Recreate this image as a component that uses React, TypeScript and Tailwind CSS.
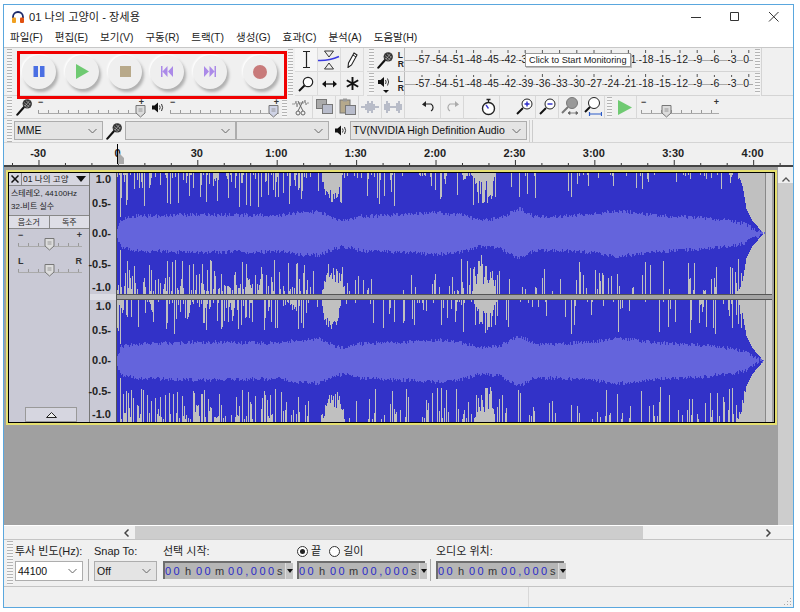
import type { ReactNode } from "react"

const menus = ["파일(F)", "편집(E)", "보기(V)", "구동(R)", "트랙(T)", "생성(G)", "효과(C)", "분석(A)", "도움말(H)"]
const meterLabels = ["-57", "-54", "-51", "-48", "-45", "-42", "-39", "-36", "-33", "-30", "-27", "-24", "-21", "-18", "-15", "-12", "-9", "-6", "-3", "0"]
const coveredLabels = ["-36", "-33", "-30", "-27", "-24"]
const rulerLabels = ["-30", "0", "30", "1:00", "1:30", "2:00", "2:30", "3:00", "3:30", "4:00"]

// rms half height of the track at a given x, read off the picture
const rmsPoints = [[118, 6], [122, 14], [135, 17], [200, 19], [280, 18], [300, 21], [320, 22], [335, 15], [345, 13], [360, 17], [400, 19], [440, 21], [465, 18], [480, 13], [500, 15], [520, 25], [535, 17], [560, 17], [600, 20], [617, 23], [660, 18], [700, 16], [730, 13], [745, 10], [755, 4], [764, 0]]
const fadePoints = [[118, 61], [738, 61], [743, 48], [747, 25], [753, 13], [764, 0]]

function lerp(points: number[][], x: number) {
  for (let i = 1; i < points.length; i++) {
    if (x <= points[i][0]) {
      const [x0, y0] = points[i - 1]
      const [x1, y1] = points[i]
      return y0 + ((y1 - y0) * (x - x0)) / (x1 - x0)
    }
  }
  return 0
}

function makeRandom(seed: number) {
  let s = seed
  return () => {
    s = (s * 1664525 + 1013904223) % 4294967296
    return s / 4294967296
  }
}

function spikeChance(x: number, bottom: boolean) {
  if (x < 310) return bottom ? 0.55 : 0.5
  if (x < 322) return 0.12
  if (x < 470) return bottom ? 0.3 : 0.28
  if (x < 500) return 0.4
  if (x < 560) return bottom ? 0.18 : 0.14
  if (x < 620) return 0.22
  if (x < 700) return bottom ? 0.18 : 0.14
  return 0.32
}

function mound(x: number, from: number, to: number, depth: number) {
  if (x < from || x > to) return 0
  const mid = (from + to) / 2
  return depth * Math.min(1, 2.5 * (1 - Math.abs(x - mid) / ((to - from) / 2)))
}

function buildWave(seed: number, h: number) {
  const rand = makeRandom(seed)
  const c = h / 2
  let peak = ""
  let rms = ""
  for (let i = 0; i < 648; i++) {
    const x = 118 + i
    const px = i + 0.5
    const fade = c - lerp(fadePoints, x)
    let top = 0
    let bot = 0
    if (rand() < spikeChance(x, false)) top = 2 + Math.pow(rand(), 2.2) * 32
    if (rand() < spikeChance(x, true)) bot = 3 + Math.pow(rand(), 1.6) * 32
    if (x === 121) { top = 44; bot = 44 }
    top = Math.max(top, mound(x, 322, 342, 24) * (0.7 + rand() * 0.5), mound(x, 474, 496, 26) * (0.3 + rand() * 1))
    bot = Math.max(bot, mound(x, 323, 346, 30) * (0.35 + rand() * 0.7), mound(x, 474, 496, 30) * (0.3 + rand() * 1))
    top = Math.max(Math.round(top), Math.round(fade))
    bot = Math.max(Math.round(bot), Math.round(fade))
    if (top + bot < h) peak += `M${px} ${top}V${h - bot}`
    const r = lerp(rmsPoints, x)
    const rt = Math.max(0, r + (rand() - 0.5) * 4)
    const rb = Math.max(0, r + (rand() - 0.5) * 4)
    if (rt + rb > 0.5) rms += `M${px} ${Math.round(c - rt)}V${Math.round(c + rb)}`
  }
  return { peak, rms }
}

function Wave({ seed, h }: { seed: number; h: number }) {
  const { peak, rms } = buildWave(seed, h)
  return (
    <svg width={648} height={h} shapeRendering="crispEdges" className="block shrink-0">
      <rect width={648} height={h} fill="#c0c0c0" />
      <path d={peak} stroke="#3232c8" strokeWidth={1} fill="none" />
      <path d={rms} stroke="#6464dc" strokeWidth={1} fill="none" />
    </svg>
  )
}

function Grip({ className = "" }: { className?: string }) {
  return <div className={`w-[5px] shrink-0 bg-[repeating-linear-gradient(to_bottom,#b4b4b4_0,#b4b4b4_1px,#f6f6f6_1px,#f6f6f6_3px)] ${className}`} />
}

function Mic({ small = false }: { small?: boolean }) {
  const size = small ? 18 : 20
  return (
    <svg width={size} height={size} viewBox="0 0 20 20" className="shrink-0">
      <path d="M9 10 L1.5 18.5" stroke="#111" strokeWidth={2.4} strokeLinecap="round" />
      <circle cx={12.5} cy={6.5} r={5.2} fill="#333" />
      <path d="M9 5l6 5M11 3l5 4M8.5 7.5l5 4M10 9l5-6M13 10l3-4" stroke="#bbb" strokeWidth={0.7} />
    </svg>
  )
}

function Speaker() {
  return (
    <svg width={13} height={13} viewBox="0 0 13 13" className="shrink-0">
      <path d="M1 4.5h2.5L7 1.5v10L3.5 8.5H1z" fill="#111" />
      <path d="M8.5 4.5q1.3 2 0 4M10.5 3q2.2 3.5 0 7" stroke="#333" strokeWidth={1} fill="none" />
    </svg>
  )
}

function Chevron() {
  return (
    <svg width={9} height={6} viewBox="0 0 9 6" className="shrink-0">
      <path d="M0.5 1l4 4 4-4" stroke="#666" strokeWidth={1} fill="none" />
    </svg>
  )
}

function Thumb({ color = "#dcdcdc" }: { color?: string }) {
  return (
    <svg width={11} height={14} viewBox="0 0 11 14">
      <path d="M1 1.5h9v7.5l-4.5 4-4.5-4z" fill={color} stroke="#777" strokeWidth={1} />
      <path d="M3.5 5h4M3.5 7h4" stroke="#888" strokeWidth={0.8} />
    </svg>
  )
}

// tick line shared by all the little gain and pan sliders
function Slider({ width, thumbClass, left = "−", right = "+", color }: { width: string; thumbClass: string; left?: string; right?: string; color?: string }) {
  return (
    <div className={`relative h-[20px] shrink-0 ${width}`}>
      <div className="flex justify-between text-[9px] leading-[10px] text-[#333] font-bold">
        <span>{left}</span>
        <span>{right}</span>
      </div>
      <div className="mt-[2px] h-[5px] border-b border-[#aaa] bg-[repeating-linear-gradient(to_right,#999_0,#999_1px,transparent_1px,transparent_10px)] bg-[length:100%_3px] bg-bottom bg-no-repeat" />
      <div className={`absolute top-[7px] ${thumbClass}`}>
        <Thumb color={color} />
      </div>
    </div>
  )
}

function Select({ width, label = "", bg = "bg-[#e4e4e4]" }: { width: string; label?: string; bg?: string }) {
  return (
    <div className={`flex h-[19px] shrink-0 items-center justify-between border border-[#adadad] pl-[2px] pr-[5px] text-[10.5px] text-[#111] ${bg} ${width}`}>
      <span className="whitespace-nowrap">{label}</span>
      <Chevron />
    </div>
  )
}

function TimeField() {
  return (
    <div className="flex h-[18px] w-[128px] shrink-0 items-stretch border-t-2 border-l-2 border-[#6e6e6e] bg-[#b6b6b6]">
      <div className="flex flex-1 whitespace-nowrap text-[11px] leading-[16px] tracking-[2.5px] text-[#333]">
        <span className="w-[20px] text-[#2a2ac8]">00</span>
        <span className="w-[11px]">h</span>
        <span className="w-[19px] text-[#2a2ac8]">00</span>
        <span className="w-[13px]">m</span>
        <span className="w-[49px] text-[#2a2ac8]">00,000</span>
        <span>s</span>
      </div>
      <div className="flex w-[8px] shrink-0 items-center justify-center border-l border-[#ddd] bg-[#c4c4c4]">
        <svg width={6} height={4} viewBox="0 0 6 4"><path d="M0 0h6L3 4z" fill="#111" /></svg>
      </div>
    </div>
  )
}

function RoundButton({ className = "", children }: { className?: string; children: ReactNode }) {
  return (
    <div className={`flex h-[34px] w-[34px] shrink-0 items-center justify-center rounded-full bg-[#efefef] shadow-[2px_3px_3px_#b0b0b0,-1px_-1px_2px_#ffffff] ${className}`}>
      {children}
    </div>
  )
}

function ToolCell({ children, className = "" }: { children: ReactNode; className?: string }) {
  return <div className={`flex h-[24px] w-[23px] items-center justify-center border-r border-b border-[#dcdcdc] ${className}`}>{children}</div>
}

function EditButton({ children, className = "" }: { children: ReactNode; className?: string }) {
  return <div className={`flex h-[23px] w-[23px] shrink-0 items-center justify-center border-r border-b border-[#d8d8d8] ${className}`}>{children}</div>
}

function MeterRow({ first, icon }: { first?: boolean; icon: ReactNode }) {
  return (
    <div className="flex h-[24px] items-stretch border-b border-[#d4d4d4]">
      <Grip className="ml-[2px] my-[1px]" />
      <div className="flex w-[30px] items-center pl-[3px]">
        {icon}
        <div className="ml-auto text-[8.5px] leading-[9px] font-bold text-[#222]">L<br />R</div>
      </div>
      <div className="relative w-[349px] border-l border-[#bbb] bg-[linear-gradient(#aaa,#aaa)] bg-[length:100%_1px] bg-[position:0_12px] bg-no-repeat">
        <svg width={349} height={5} className="block">
          <path d={Array.from({ length: 20 }, (_, i) => `M${17 + i * 17.2} ${i % 3 === 1 || first ? 2 : 3}V5`).join("")} stroke="#555" fill="none" />
        </svg>
        <div className="flex pl-[9px] text-[10.5px] leading-[13px] text-[#222]">
          {meterLabels.map((m) => (
            <div key={m} className={`flex w-[17.2px] shrink-0 justify-center ${m === "0" ? "ml-[-3px]" : ""} ${first && coveredLabels.includes(m) ? "invisible" : ""}`}>
              <span className="bg-[#f0f0f0]">{m}</span>
            </div>
          ))}
        </div>
        {first && (
          <div className="absolute left-[120px] top-[5px] whitespace-nowrap border border-[#999] bg-white px-[3px] text-[9.2px] leading-[12px] text-[#222] shadow-[1px_1px_0_#bbb]">
            Click to Start Monitoring
          </div>
        )}
      </div>
      <Grip className="ml-[2px] my-[1px]" />
    </div>
  )
}

function Ruler({ first }: { first?: boolean }) {
  return (
    <div className={`flex w-[26px] shrink-0 flex-col items-end bg-[#c9c9d5] pr-[5px] text-[11px] font-bold leading-[14px] text-[#222] ${first ? "h-[121px]" : "h-[122px]"}`}>
      <span className="mt-[-1px]">1.0</span>
      <span className="mt-[10px]">0.5-</span>
      <span className="mt-[16px]">0.0-</span>
      <span className="mt-[17px]">-0.5-</span>
      <span className="mt-[9px]">-1.0</span>
    </div>
  )
}

export default function App() {
  return (
    <div className="h-[612px] w-[800px] overflow-hidden bg-white pl-[3px] pt-[4px] font-['Liberation_Sans','Noto_Sans_CJK_KR',sans-serif] text-[#111]">
      <div className="flex h-[604px] w-[791px] flex-col border border-[#5aa7de] bg-[#f0f0f0]">
        {/* Title bar */}
        <div className="flex h-[24px] shrink-0 items-center bg-white pl-[7px] text-[11.2px] text-[#222]">
          <svg width={14} height={14} viewBox="0 0 14 14" className="shrink-0">
            <path d="M2 8V7a5 5 0 0 1 10 0v1" stroke="#1c2a6a" strokeWidth={1.8} fill="none" />
            <rect x={1} y={7.5} width={4} height={5.5} rx={1} fill="#f0a020" />
            <rect x={9} y={7.5} width={4} height={5.5} rx={1} fill="#e05010" />
          </svg>
          <span className="ml-[4px]">01 나의 고양이 - 장세용</span>
          <svg width={89} height={12} viewBox="0 0 89 12" className="ml-auto mr-[13px]">
            <path d="M0 6.5h10M39.5 1.5h8v8h-8zM78 1l9.5 9.5M87.5 1L78 10.5" stroke="#333" strokeWidth={1} fill="none" />
          </svg>
        </div>

        {/* Menu */}
        <div className="flex h-[18px] shrink-0 items-center gap-[12px] bg-white pl-[6px] text-[10.5px] text-[#222]">
          {menus.map((m) => (
            <span key={m}>{m}</span>
          ))}
        </div>

        {/* Toolbars, first row */}
        <div className="relative flex h-[49px] shrink-0 border-t border-[#c8c8c8]">
          <div className="flex w-[282px] shrink-0 items-center border-b border-[#d4d4d4]">
            <Grip className="ml-[3px] h-[45px]" />
            <RoundButton className="ml-[10px]">
              <svg width={12} height={11} viewBox="0 0 12 11"><path d="M0.5 0h4.5v11H0.5zM7 0h4.5v11H7z" fill="#4a6fe3" /></svg>
            </RoundButton>
            <RoundButton className="ml-[9px]">
              <svg width={14} height={15} viewBox="0 0 14 15"><path d="M1 0l13 7.5L1 15z" fill="#6fca72" /></svg>
            </RoundButton>
            <RoundButton className="ml-[9px]">
              <div className="h-[11px] w-[11px] bg-[#b8a98a]" />
            </RoundButton>
            <RoundButton className="ml-[8px]">
              <svg width={12} height={11} viewBox="0 0 12 11"><path d="M0 0h1.5v11H0zM6.5 0v11L1.5 5.5zM12 0v11L7 5.5z" fill="#ab8ae8" /></svg>
            </RoundButton>
            <RoundButton className="ml-[9px]">
              <svg width={12} height={11} viewBox="0 0 12 11"><path d="M12 0h-1.5v11H12zM5.500 0v11l5-5.500zM0 0v11l5-5.500z" fill="#ab8ae8" /></svg>
            </RoundButton>
            <RoundButton className="ml-[16px]">
              <div className="h-[14px] w-[14px] rounded-full bg-[#c87a7a]" />
            </RoundButton>
          </div>
          <Grip className="ml-[2px] my-[1px]" />
          <div className="ml-[2px] grid h-[48px] shrink-0 grid-cols-3">
            <ToolCell className="bg-[#f6f6f6]">
              <svg width={9} height={17} viewBox="0 0 9 17"><path d="M1 .5h7M4.5 .5v16M1 16.5h7" stroke="#222" strokeWidth={1.2} fill="none" /></svg>
            </ToolCell>
            <ToolCell>
              <svg width={22} height={20} viewBox="0 0 22 20">
                <path d="M6.5 1h9L11 7zM6.5 19h9L11 13z" fill="#eee" stroke="#222" strokeWidth={0.9} />
                <path d="M0 10.5q11 .5 21-4" stroke="#3a3ae0" strokeWidth={1.6} fill="none" />
              </svg>
            </ToolCell>
            <ToolCell>
              <svg width={12} height={16} viewBox="0 0 12 16"><path d="M8 1l3 2-5.500 10L2 15.500 2.500 11z" fill="#fff" stroke="#222" strokeWidth={1.1} /><path d="M7 3l3 2" stroke="#222" /></svg>
            </ToolCell>
            <ToolCell>
              <svg width={16} height={16} viewBox="0 0 16 16"><circle cx={10} cy={6} r={4.7} fill="#fff" stroke="#222" strokeWidth={1.2} /><path d="M6.500 9.500L1 15" stroke="#111" strokeWidth={2} /></svg>
            </ToolCell>
            <ToolCell>
              <svg width={15} height={8} viewBox="0 0 15 8"><path d="M2 4h11" stroke="#111" strokeWidth={1.3} /><path d="M0 4l4-3.500v7zM15 4l-4-3.500v7z" fill="#111" /></svg>
            </ToolCell>
            <ToolCell>
              <svg width={13} height={13} viewBox="0 0 13 13"><path d="M6.500 0v13M.8 3.200l11.400 6.600M.8 9.800l11.400-6.600" stroke="#111" strokeWidth={1.9} /></svg>
            </ToolCell>
          </div>
          <div className="ml-[3px] flex flex-col">
            <MeterRow first icon={<Mic small />} />
            <MeterRow
              icon={
                <svg width={16} height={18} viewBox="0 0 16 18" className="shrink-0">
                  <path d="M1 5h2.500L7 2v10L3.500 9H1z" fill="#111" />
                  <path d="M8.500 5q1.300 2 0 4M10.500 3.500q2.200 3.500 0 7" stroke="#222" strokeWidth={0.9} fill="none" />
                  <path d="M6 15h6l-3 3z" fill="#111" />
                </svg>
              }
            />
          </div>
          <div className="ml-[1px] flex-1 border-l border-b border-[#d4d4d4]" />
          {/* red annotation */}
          <div className="absolute left-[13px] top-[3px] h-[48px] w-[270px] border-[3px] border-[#f00000]" />
        </div>

        {/* Second row */}
        <div className="flex h-[23px] shrink-0 items-center border-b border-[#d4d4d4]">
          <Grip className="ml-[3px] h-[21px]" />
          <div className="ml-[4px]"><Mic small /></div>
          <Slider width="ml-[4px] w-[106px]" thumbClass="left-[97px]" />
          <div className="ml-[7px]"><Speaker /></div>
          <Slider width="ml-[6px] w-[109px]" thumbClass="left-[98px]" color="#cfd3e6" />
          <Grip className="ml-[3px] h-[21px]" />
          <div className="ml-[3px] flex">
            <EditButton>
              <svg width={18} height={18} viewBox="0 0 18 18"><path d="M0 6h3l1-3 1 6 1-4h6l1-3 1 5 1-2h2" stroke="#999" fill="none" /><circle cx={6} cy={15} r={2} fill="none" stroke="#666" /><circle cx={11} cy={15} r={2} fill="none" stroke="#666" /><path d="M6 13l5-10M11 13L6 3" stroke="#666" /></svg>
            </EditButton>
            <EditButton>
              <svg width={17} height={15} viewBox="0 0 17 15"><rect x={.5} y={.5} width={10} height={9} fill="#aaa" stroke="#777" /><rect x={6.5} y={5.5} width={10} height={9} fill="#b8bccb" stroke="#777" /></svg>
            </EditButton>
            <EditButton>
              <svg width={17} height={17} viewBox="0 0 17 17"><rect x={1} y={2} width={10} height={13} fill="#b5a98c" stroke="#777" /><rect x={4} y={0.5} width={4} height={3} fill="#999" /><rect x={6.5} y={7.5} width={10} height={9} fill="#b8bccb" stroke="#777" /></svg>
            </EditButton>
            <EditButton>
              <svg width={18} height={14} viewBox="0 0 18 14"><path d="M0 7h4M14 7h4M5 4v6M7 1v12M9 3v8M11 1v12M13 4v6" stroke="#8088a0" fill="none" /></svg>
            </EditButton>
            <EditButton>
              <svg width={18} height={14} viewBox="0 0 18 14"><path d="M1 4v6M3 1v12M5 3v8M6 7h6M13 3v8M15 1v12M17 4v6" stroke="#8088a0" fill="none" /></svg>
            </EditButton>
          </div>
          <div className="ml-[13px] flex">
            <EditButton>
              <svg width={14} height={11} viewBox="0 0 14 11"><path d="M3 3h6a4 4 0 0 1 0 7" stroke="#222" strokeWidth={1.2} fill="none" /><path d="M0 3.5L4 0v6z" fill="#222" /></svg>
            </EditButton>
            <EditButton>
              <svg width={14} height={11} viewBox="0 0 14 11"><path d="M11 3H5a4 4 0 0 0 0 7" stroke="#aaa" strokeWidth={1.2} fill="none" /><path d="M14 3.5L10 0v6z" fill="#aaa" /></svg>
            </EditButton>
          </div>
          <div className="ml-[13px] flex">
            <EditButton>
              <svg width={15} height={18} viewBox="0 0 15 18"><circle cx={7.5} cy={10.5} r={6} fill="#fff" stroke="#222" strokeWidth={1.4} /><path d="M5.5 1.5h4M7.5 1.5v3" stroke="#222" strokeWidth={1.3} /><path d="M7.5 10.5L5 7" stroke="#3a3ad0" strokeWidth={1.3} /></svg>
            </EditButton>
          </div>
          <div className="ml-[13px] flex">
            <EditButton>
              <svg width={17} height={17} viewBox="0 0 17 17"><circle cx={11} cy={6} r={5} fill="#fff" stroke="#222" /><path d="M7 10l-6 6" stroke="#111" strokeWidth={2} /><path d="M8.5 6h5M11 3.5v5" stroke="#2a2ac8" strokeWidth={1.4} /></svg>
            </EditButton>
            <EditButton>
              <svg width={17} height={17} viewBox="0 0 17 17"><circle cx={11} cy={6} r={5} fill="#fff" stroke="#222" /><path d="M7 10l-6 6" stroke="#111" strokeWidth={2} /><path d="M8.5 6h5" stroke="#2a2ac8" strokeWidth={1.4} /></svg>
            </EditButton>
            <EditButton>
              <svg width={18} height={19} viewBox="0 0 18 19"><circle cx={11} cy={6} r={5.5} fill="#999" stroke="#777" /><path d="M7 10l-6 6" stroke="#777" strokeWidth={2} /><path d="M7 16h10M7 16l2-1.5v3zM17 16l-2-1.5v3z" stroke="#666" strokeWidth={.8} fill="#666" /></svg>
            </EditButton>
            <EditButton>
              <svg width={18} height={19} viewBox="0 0 18 19"><circle cx={10} cy={6} r={5.5} fill="#fff" stroke="#222" /><path d="M6 10l-5 5" stroke="#111" strokeWidth={2} /><path d="M5.5 17h12M5.5 15v4M17.5 15v4" stroke="#2a5ac8" strokeWidth={1.2} fill="none" /></svg>
            </EditButton>
          </div>
          <Grip className="ml-[2px] h-[21px]" />
          <div className="ml-[2px] flex h-[23px] w-[23px] items-center justify-center border-r border-[#d8d8d8]">
            <svg width={14} height={15} viewBox="0 0 14 15"><path d="M0 0l14 7.5L0 15z" fill="#6fca72" /></svg>
          </div>
          <Slider width="ml-[4px] w-[78px]" thumbClass="left-[20px]" />
        </div>

        {/* Third row */}
        <div className="flex h-[24px] shrink-0 items-center border-b border-[#d4d4d4]">
          <Grip className="ml-[3px] h-[22px]" />
          <Select width="ml-[2px] w-[89px]" label="MME" />
          <div className="ml-[3px]"><Mic small /></div>
          <Select width="ml-[1px] w-[111px]" />
          <Select width="w-[93px]" />
          <div className="ml-[5px]"><Speaker /></div>
          <Select width="ml-[3px] w-[177px]" label="TV(NVIDIA High Definition Audio" />
          <div className="ml-[2px] h-[22px] w-[4px] border-x border-[#ccc]" />
        </div>

        {/* Timeline */}
        <div className="relative flex h-[24px] shrink-0 flex-col overflow-hidden border-b-2 border-[#444]">
          <div className="ml-[-5.6px] flex pt-[4px] text-[11px] font-bold leading-[13px] text-[#222]">
            {rulerLabels.map((r) => (
              <div key={r} className="w-[79.4px] shrink-0 text-center">{r}</div>
            ))}
          </div>
          <svg width={789} height={5} className="mt-auto block">
            <path d={Array.from({ length: 30 }, (_, i) => `M${8.5 + i * 26.47} ${(i + 2) % 3 === 0 ? 0 : 3}V5`).join("")} stroke="#333" fill="none" />
          </svg>
          <div className="absolute left-[113px] top-[1px] h-[20px] w-[1px] bg-black" />
          <svg width={6} height={12} viewBox="0 0 6 12" className="absolute left-[114px] top-[9px]">
            <path d="M0 0l6 6v6H0z" fill="#aaa" />
          </svg>
        </div>

        {/* Track area */}
        <div className="flex h-[358px] shrink-0 overflow-hidden">
          <div className="flex-1 bg-[#a0a0a0] pl-[2px] pt-[3px]">
            <div className="h-[255px] w-[771px] border-2 border-[#e6e070]">
              <div className="flex h-[251px] border border-black">
                {/* Track panel */}
                <div className="flex w-[81px] shrink-0 flex-col border-r border-[#777] bg-[#c9c9d5] text-[8px] leading-[13px] text-[#222]">
                  <div className="flex h-[13px] border-b border-[#888] bg-[#d6d6e0] text-[8.5px]">
                    <div className="flex w-[13px] items-center justify-center border-r border-[#888]">
                      <svg width={8} height={8} viewBox="0 0 8 8"><path d="M.5.5l7 7M7.5.5l-7 7" stroke="#111" strokeWidth={1.5} /></svg>
                    </div>
                    <span className="ml-[1px] flex-1 truncate">01 나의 고양</span>
                    <svg width={10} height={6} viewBox="0 0 10 6" className="mr-[3px] mt-[3px]"><path d="M0 0h10L5 6z" fill="#111" /></svg>
                  </div>
                  <div className="mt-[1px] pl-[2px] leading-[13px]">스테레오, 44100Hz</div>
                  <div className="pl-[2px] leading-[13px]">32-비트 실수</div>
                  <div className="mt-[2px] flex h-[14px] border-y border-[#888]">
                    <div className="flex-1 border-r border-[#888] bg-[#dedee6] text-center">음소거</div>
                    <div className="flex-1 bg-[#dedee6] text-center">독주</div>
                  </div>
                  <div className="ml-[9px] mt-[1px]">
                    <Slider width="w-[64px]" thumbClass="left-[26px]" />
                  </div>
                  <div className="ml-[9px] mt-[6px]">
                    <Slider width="w-[64px]" thumbClass="left-[26px]" left="L" right="R" />
                  </div>
                  <div className="ml-[16px] mt-auto flex h-[15px] w-[52px] items-center justify-center border border-[#999] bg-[#d6d6e0]">
                    <svg width={11} height={6} viewBox="0 0 11 6"><path d="M5.5 .5L10.5 5.5H.5z" fill="#eee" stroke="#222" /></svg>
                  </div>
                </div>
                {/* Rulers */}
                <div className="flex w-[27px] shrink-0 flex-col border-r border-[#555]">
                  <Ruler first />
                  <div className="h-[6px] bg-[#dcdce4]" />
                  <Ruler />
                </div>
                {/* Waveforms */}
                <div className="flex flex-col">
                  <div className="flex h-[121px]">
                    <Wave seed={11} h={121} />
                    <div className="w-[7px] border-l border-[#888] bg-[#d2d2d2]" />
                  </div>
                  <div className="h-[6px] border-y border-[#555] bg-[#a4a4a4]" />
                  <div className="flex h-[122px]">
                    <Wave seed={29} h={122} />
                    <div className="w-[7px] border-l border-[#888] bg-[#d2d2d2]" />
                  </div>
                </div>
              </div>
            </div>
          </div>
          {/* Vertical scrollbar */}
          <div className="flex w-[15px] shrink-0 flex-col bg-[#cdcdcd]">
            <div className="flex h-[16px] items-end justify-center bg-[#f0f0f0]">
              <svg width={8} height={5} viewBox="0 0 8 5" className="mb-[1px]"><path d="M.5 4.5l3.5-3.5 3.5 3.5" stroke="#555" strokeWidth={1.3} fill="none" /></svg>
            </div>
          </div>
        </div>

        {/* Horizontal scrollbar */}
        <div className="flex h-[14px] shrink-0 items-center border-t border-white bg-[#f0f0f0]">
          <svg width={6} height={8} viewBox="0 0 6 8" className="ml-[120px]"><path d="M4.5.5L1 4l3.5 3.5" stroke="#444" strokeWidth={1.5} fill="none" /></svg>
          <div className="ml-[5px] h-full w-[508px] bg-[#cdcdcd]" />
          <svg width={6} height={8} viewBox="0 0 6 8" className="ml-[122px]"><path d="M1.5.5L5 4 1.5 7.5" stroke="#444" strokeWidth={1.5} fill="none" /></svg>
        </div>

        {/* Selection bar */}
        <div className="flex h-[48px] shrink-0 border-y border-[#c4c4c4] text-[11px] leading-[13px] text-[#222]">
          <Grip className="ml-[3px] mt-[1px] h-[44px] w-[6px]" />
          <div className="ml-[2px] flex w-[69px] shrink-0 flex-col pt-[5px]">
            <span className="whitespace-nowrap">투사 빈도(Hz):</span>
            <Select width="mt-[3px] w-[68px] h-[20px]" label="44100" bg="bg-white" />
          </div>
          <div className="ml-[4px] mt-[19px] h-[22px] w-[1px] bg-[#aaa]" />
          <div className="ml-[5px] flex w-[69px] shrink-0 flex-col pt-[5px]">
            <span>Snap To:</span>
            <Select width="mt-[3px] w-[63px] h-[20px]" label="Off" />
          </div>
          <div className="flex w-[134px] shrink-0 flex-col pt-[5px]">
            <span>선택 시작:</span>
            <div className="mt-[3px]"><TimeField /></div>
          </div>
          <div className="flex w-[134px] shrink-0 flex-col pt-[4px]">
            <div className="flex h-[14px] items-center">
              <div className="flex h-[11px] w-[11px] items-center justify-center rounded-full border border-[#333] bg-white">
                <div className="h-[5px] w-[5px] rounded-full bg-[#222]" />
              </div>
              <span className="ml-[3px]">끝</span>
              <div className="ml-[8px] h-[11px] w-[11px] rounded-full border border-[#333] bg-white" />
              <span className="ml-[3px]">길이</span>
            </div>
            <div className="mt-[3px]"><TimeField /></div>
          </div>
          <div className="ml-[-1px] mt-[19px] h-[22px] w-[1px] bg-[#aaa]" />
          <div className="ml-[5px] flex w-[130px] shrink-0 flex-col pt-[5px]">
            <span>오디오 위치:</span>
            <div className="mt-[3px]"><TimeField /></div>
          </div>
        </div>

        {/* Status bar */}
        <div className="flex flex-1 items-end">
          <div className="h-full w-[525px] border-r border-[#d8d8d8]" />
          <svg width={9} height={9} viewBox="0 0 9 9" className="mb-[1px] ml-auto mr-[1px]">
            <path d="M7 1h1v1H7zM4 4h1v1H4zM7 4h1v1H7zM1 7h1v1H1zM4 7h1v1H4zM7 7h1v1H7z" fill="#aaa" />
          </svg>
        </div>
      </div>
    </div>
  )
}
